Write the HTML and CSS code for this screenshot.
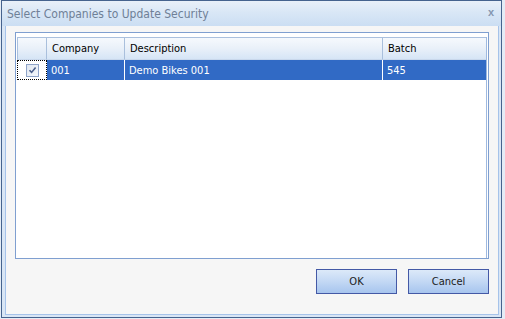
FILE: index.html
```html
<!DOCTYPE html>
<html>
<head>
<meta charset="utf-8">
<link rel="stylesheet" href="styles.css">
</head>
<body>
<div class="window">
  <div class="titlebar">
    <span class="title">Select Companies to Update Security</span>
    <span class="close">x</span>
  </div>
  <div class="panel">
    <div class="gridframe">
      <div class="gridinner">
        <table class="grid">
          <thead>
            <tr>
              <th class="c-check"></th>
              <th class="c-company">Company</th>
              <th class="c-desc">Description</th>
              <th class="c-batch">Batch</th>
            </tr>
          </thead>
          <tbody>
            <tr class="selected">
              <td class="c-check focus"><span class="checkbox"><svg width="9" height="9" viewBox="0 0 9 9"><path d="M1.5 4.2 L3.6 6.4 L7.6 1.6" fill="none" stroke="#4a5f8c" stroke-width="1.6"/></svg></span></td>
              <td class="c-company">001</td>
              <td class="c-desc">Demo Bikes 001</td>
              <td class="c-batch">545</td>
            </tr>
          </tbody>
        </table>
      </div>
    </div>
    <div class="buttons">
      <button class="btn">OK</button>
      <button class="btn">Cancel</button>
    </div>
  </div>
</div>
</body>
</html>
```
FILE: styles.css
```css
html, body {
  margin: 0;
  padding: 0;
  background: #e4ecf6;
}
body {
  font-family: "DejaVu Sans Condensed", "DejaVu Sans", sans-serif;
  font-stretch: condensed;
  font-size: 11px;
  color: #000;
}
.window {
  box-sizing: border-box;
  width: 501px;
  height: 318px;
  margin-left: 1px;
  border: 1px solid #46638e;
  background: #d9e6f5;
  display: flex;
  flex-direction: column;
}
.titlebar {
  height: 25px;
  flex: none;
  display: flex;
  align-items: center;
  justify-content: space-between;
  padding: 0 7px 0 5px;
  background: linear-gradient(to bottom, #e9f0f9 0%, #d9e7f6 45%, #cbdef3 100%);
}
.title {
  font-size: 12px;
  color: #6f8097;
  margin-top: 1px;
}
.close {
  font-family: "Liberation Sans", sans-serif;
  font-weight: bold;
  font-size: 11px;
  color: #8597b0;
  margin-top: -4px;
}
.panel {
  flex: 1;
  margin: 0 2px 2px 3px;
  border: 1px solid #a6c3ea;
  border-top: none;
  background: #f6f6f6;
  padding: 6px 9px 20px 9px;
  display: flex;
  flex-direction: column;
  gap: 10px;
}
.gridframe {
  flex: 1;
  border: 1px solid #7f9fd0;
  background: #fff;
  padding: 4px 1px 0 1px;
  display: flex;
}
.gridinner {
  flex: 1;
  border-right: 1px solid #9fb9df;
}
.grid {
  border-collapse: separate;
  border-spacing: 0;
  table-layout: fixed;
  width: 469px;
}
.grid th, .grid td {
  box-sizing: border-box;
  padding: 0 0 0 4px;
  text-align: left;
  white-space: nowrap;
  overflow: hidden;
}
.grid th {
  height: 23px;
  font-weight: normal;
  border-top: 1px solid #aac0de;
  border-bottom: 1px solid #c9d8ec;
  border-right: 1px solid #a9bfdc;
  background: linear-gradient(to bottom, #f6f9fd 0%, #e9f0f9 50%, #d6e5f6 100%);
  padding-left: 5px;
}
.grid th.c-check {
  border-left: 1px solid #aac0de;
}
.grid th.c-batch { border-right: none; }
.c-check { width: 30px; }
.c-company { width: 78px; }
.c-desc { width: 258px; }
.grid td {
  height: 20px;
  border-right: 1px solid #fff;
}
.grid td.c-batch { border-right: none; }
.selected td {
  background: #316ac5;
  color: #fff;
}
.selected td.c-check {
  background: #fff;
  padding: 0;
  text-align: center;
  outline: 1px dotted #000;
  outline-offset: -1px;
}
.checkbox {
  display: inline-flex;
  align-items: center;
  justify-content: center;
  box-sizing: border-box;
  width: 13px;
  height: 13px;
  border: 1px solid #8ea3c8;
  background: linear-gradient(135deg, #dfe6f0 0%, #f4f7fb 100%);
  vertical-align: middle;
  margin-left: 1px;
}
.buttons {
  display: flex;
  justify-content: flex-end;
  gap: 11px;
  flex: none;
}
.btn {
  box-sizing: border-box;
  width: 81px;
  height: 25px;
  border: 1px solid #4459a6;
  background: linear-gradient(to bottom, #dce9f9 0%, #c3d8f4 50%, #a7c5ee 100%);
  font-family: "DejaVu Sans Condensed", "DejaVu Sans", sans-serif;
  font-stretch: condensed;
  font-size: 11px;
  color: #1b1b1b;
  padding: 0;
}
```
